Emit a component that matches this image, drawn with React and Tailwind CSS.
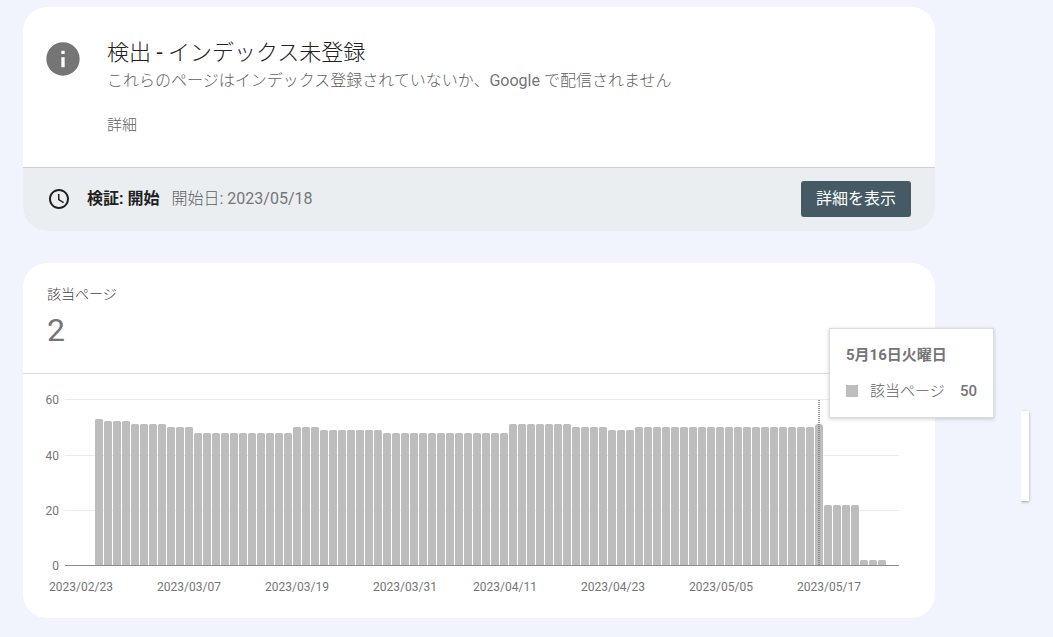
import { MdInfo, MdAccessTime } from 'react-icons/md';

// [number of days, pages per day]
const RUNS = [
    [1, 53], [3, 52], [4, 51], [3, 50], [11, 48], [3, 50], [7, 49], [14, 48],
    [7, 51], [4, 50], [3, 49], [20, 50], [1, 51], [4, 22], [3, 2],
];

const DAYS = RUNS.flatMap(([count, pages]) => Array(count).fill(pages));

const Y_TICKS = [
    { value: 60, y: 25 },
    { value: 40, y: 81 },
    { value: 20, y: 136 },
];

const X_TICKS = [
    { label: '2023/02/23', x: 58 },
    { label: '2023/03/07', x: 166 },
    { label: '2023/03/19', x: 274 },
    { label: '2023/03/31', x: 382 },
    { label: '2023/04/11', x: 482 },
    { label: '2023/04/23', x: 590 },
    { label: '2023/05/05', x: 698 },
    { label: '2023/05/17', x: 806 },
];

const BASELINE = 191;
const HOVERED = 80;

export default function App() {
    return (
        <div className="min-h-screen bg-[#f1f4fd] flex items-start font-['Roboto','Noto_Sans_CJK_JP',sans-serif] text-[#757575]">
            <main className="flex-1 min-w-0 pl-[23px] pt-[7px] pb-[19px] flex flex-col gap-8" lang="ja">
                <StatusCard />
                <PagesCard />
            </main>
            <aside className="w-[118px] shrink-0 pt-[407px] pl-[86px]">
                <div className="w-3 py-1 overflow-hidden">
                    <div className="w-2 h-[90px] bg-white shadow-[0_1px_3px_rgba(0,0,0,0.35)]"></div>
                </div>
            </aside>
        </div>
    );
}

function StatusCard() {
    return (
        <section className="bg-white rounded-3xl overflow-hidden">
            <div className="flex gap-6 pl-5 pr-6 pt-8 pb-7">
                <MdInfo className="size-10 shrink-0 text-[#757575]" />
                <div>
                    <h1 className="text-[22px] leading-7 font-light text-[#212121]">
                        検出<span className="font-normal"> - </span>インデックス未登録
                    </h1>
                    <p className="text-base leading-7 font-light text-[#616161]">
                        これらのページはインデックス登録されていないか、<span className="font-normal text-[#757575]">Google </span>で配信されません
                    </p>
                    <a href="#details" className="block mt-4 text-[15px] leading-7 font-light text-[#616161]">詳細</a>
                </div>
            </div>
            <div className="flex items-center border-t border-[#cfd2d4] bg-[#ebeef1] px-6 pt-[13px] pb-[14px]">
                <MdAccessTime className="size-6 text-[#212121]" />
                <span className="ml-4 text-base font-bold text-[#212121]">検証: 開始</span>
                <span className="ml-3 text-base font-light text-[#616161]">
                    開始日<span className="font-normal text-[#757575]">: 2023/05/18</span>
                </span>
                <button type="button" className="ml-auto h-9 px-[15px] rounded-[3px] bg-[#455a64] text-base text-white">
                    詳細を表示
                </button>
            </div>
        </section>
    );
}

function PagesCard() {
    return (
        <section className="relative bg-white rounded-3xl">
            <div className="px-6 pt-5 pb-[22px] border-b border-[#dadce0]">
                <h2 className="text-sm leading-[22px] font-light text-[#424242]">該当ページ</h2>
                <div className="mt-1 text-[32px] leading-[42px]">2</div>
            </div>
            <PagesChart />
            <ChartTooltip />
        </section>
    );
}

function PagesChart() {
    return (
        <svg viewBox="0 0 912 244" className="block w-full" role="img" aria-label="該当ページ">
            <g shapeRendering="crispEdges">
                {Y_TICKS.map(tick => (
                    <rect key={tick.value} x="42" y={tick.y} width="834" height="1" fill="#ebebeb" />
                ))}
                <rect x="42" y={BASELINE} width="834" height="1" fill="#8c8c8c" />
            </g>
            {DAYS.map((pages, i) => {
                const top = Math.round(BASELINE + 0.5 - pages * 2.77);
                const x = 72 + i * 9;
                const r = i === HOVERED ? 3 : 1.5;
                return (
                    <path
                        key={i}
                        d={`M${x} ${BASELINE}V${top + r}q0 ${-r} ${r} ${-r}h${8 - 2 * r}q${r} 0 ${r} ${r}V${BASELINE}z`}
                        fill="#bdbdbd"
                    />
                );
            })}
            <line x1="796" x2="796" y1="26" y2={BASELINE} stroke="#757575" strokeWidth="2" strokeDasharray="1 1" opacity="0.7" />
            <g fill="#757575" fontSize="12">
                {Y_TICKS.map(tick => (
                    <text key={tick.value} x="36" y={tick.y + 5} textAnchor="end">{tick.value}</text>
                ))}
                <text x="36" y={BASELINE + 5} textAnchor="end">0</text>
                {X_TICKS.map(tick => (
                    <text key={tick.label} x={tick.x} y="217" textAnchor="middle">{tick.label}</text>
                ))}
            </g>
        </svg>
    );
}

function ChartTooltip() {
    return (
        <div className="absolute top-[65px] -right-[59px] w-[165px] h-[90px] p-4 bg-white border border-[#dadce0] shadow-[0_1px_4px_rgba(0,0,0,0.2)] text-[15px] leading-5">
            <div className="font-bold">5月16日火曜日</div>
            <div className="mt-4 flex items-center">
                <span className="size-3 bg-[#bdbdbd]"></span>
                <span className="ml-3 font-light text-[#616161]">該当ページ</span>
                <span className="ml-auto font-medium">50</span>
            </div>
        </div>
    );
}
